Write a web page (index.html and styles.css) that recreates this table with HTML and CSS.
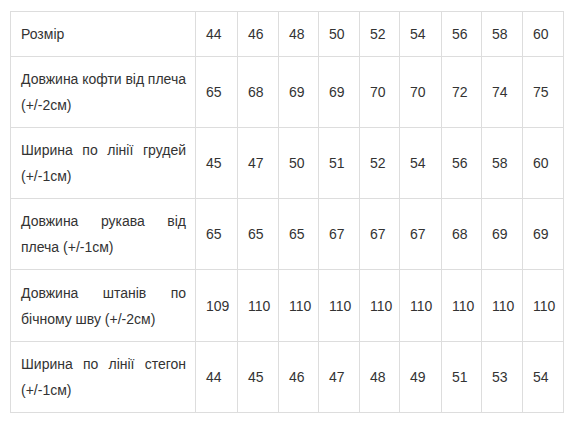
FILE: index.html
```html
<!DOCTYPE html>
<html lang="uk">
<head>
<meta charset="utf-8">
<link rel="stylesheet" href="styles.css">
</head>
<body>
<table class="sizes">
  <colgroup>
    <col class="c-label">
    <col class="c42"><col class="c41"><col class="c40"><col class="c41"><col class="c40"><col class="c42"><col class="c40"><col class="c41"><col class="c41">
  </colgroup>
  <tbody>
    <tr class="one">
      <td class="label">Розмір</td>
      <td>44</td><td>46</td><td>48</td><td>50</td><td>52</td><td>54</td><td>56</td><td>58</td><td>60</td>
    </tr>
    <tr>
      <td class="label"><span class="l1">Довжина кофти від плеча</span> <span class="l2">(+/-2см)</span></td>
      <td>65</td><td>68</td><td>69</td><td>69</td><td>70</td><td>70</td><td>72</td><td>74</td><td>75</td>
    </tr>
    <tr>
      <td class="label"><span class="l1">Ширина по лінії грудей</span> <span class="l2">(+/-1см)</span></td>
      <td>45</td><td>47</td><td>50</td><td>51</td><td>52</td><td>54</td><td>56</td><td>58</td><td>60</td>
    </tr>
    <tr>
      <td class="label"><span class="l1">Довжина рукава від</span> <span class="l2">плеча (+/-1см)</span></td>
      <td>65</td><td>65</td><td>65</td><td>67</td><td>67</td><td>67</td><td>68</td><td>69</td><td>69</td>
    </tr>
    <tr class="tall">
      <td class="label"><span class="l1">Довжина штанів по</span> <span class="l2">бічному шву (+/-2см)</span></td>
      <td>109</td><td>110</td><td>110</td><td>110</td><td>110</td><td>110</td><td>110</td><td>110</td><td>110</td>
    </tr>
    <tr>
      <td class="label"><span class="l1">Ширина по лінії стегон</span> <span class="l2">(+/-1см)</span></td>
      <td>44</td><td>45</td><td>46</td><td>47</td><td>48</td><td>49</td><td>51</td><td>53</td><td>54</td>
    </tr>
  </tbody>
</table>
</body>
</html>
```
FILE: styles.css
```css
html, body {
  margin: 0;
  background: #ffffff;
}
body {
  padding: 11px 0 0 10px;
  font-family: "Liberation Sans", Arial, sans-serif;
  font-size: 14px;
  color: #333333;
}
.sizes {
  border-collapse: collapse;
  table-layout: fixed;
  width: 554px;
}
.sizes td {
  border: 1px solid #dddddd;
  padding: 9px 2px 9px 10px;
  line-height: 26px;
  vertical-align: middle;
  text-align: left;
  white-space: nowrap;
}
.sizes td.label {
  white-space: normal;
  padding-right: 9px;
}
.label .l1 {
  display: block;
  white-space: nowrap;
  word-spacing: -2px;
  text-align: justify;
  text-align-last: justify;
}
.label .l2 {
  display: block;
}
.sizes tr.tall td {
  padding-top: 10px;
}
.c-label { width: 185px; }
.c42 { width: 42px; }
.c41 { width: 41px; }
.c40 { width: 40px; }
```
